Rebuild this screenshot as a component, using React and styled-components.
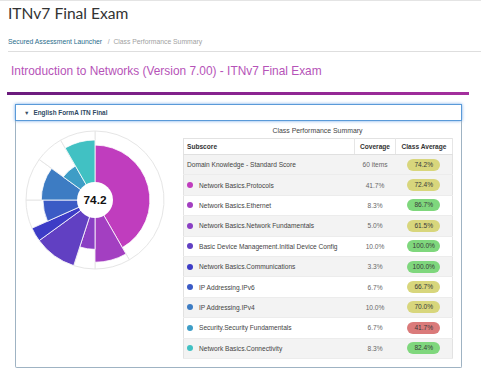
import React from 'react';
import styled, { createGlobalStyle } from 'styled-components';

const GlobalStyle = createGlobalStyle`
  html, body {
    margin: 0;
    padding: 0;
    background: #fff;
  }

  body {
    font-family: "Liberation Sans", Arial, sans-serif;
    color: #333;
  }
`;

const Page = styled.div`
  border-top: 1px solid #e4e4e4;
  width: 481px;
  height: 370px;
  overflow: hidden;
`;

const Title = styled.h1`
  font-family: Lato, "Liberation Sans", sans-serif;
  font-size: 15.6px;
  font-weight: 400;
  line-height: 20px;
  color: #333;
  margin: 2px 0 0 8px;
`;

const Breadcrumbs = styled.div`
  margin: 14px 0 0 8px;
  padding-bottom: 5px;
  border-bottom: 1px solid #dedede;
  font-size: 6.8px;
  line-height: 9px;
  color: #a2a2a2;
  white-space: pre;
`;

const Crumb = styled.span`
  color: #2a6d8c;
`;

const Heading = styled.h2`
  font-family: "Liberation Sans", Arial, sans-serif;
  font-size: 11.9px;
  font-weight: 400;
  line-height: 16px;
  color: #b653b8;
  margin: 11px 0 0 11px;
`;

const Rule = styled.div`
  height: 3px;
  margin: 13px 12px 0 7px;
  background: linear-gradient(90deg, #6a1b7c, #8a2490 50%, #a42f9d);
`;

const Panel = styled.section`
  margin: 9px 19px 0 15px;
`;

const PanelHeader = styled.div`
  height: 15px;
  border: 1px solid #5a9ad8;
  box-shadow: 0 0 3px rgba(80, 150, 230, 0.8);
  display: flex;
  align-items: center;
  padding-left: 8px;
  font-size: 6.4px;
  font-weight: 700;
  color: #2f4a63;
`;

const Caret = styled.span`
  font-size: 5.5px;
  margin-right: 4px;
  color: #3a4f66;
`;

const PanelBody = styled.div`
  height: 246px;
  border: 1px solid #9fb3c3;
  border-top: none;
  border-radius: 0 0 2px 2px;
  display: flex;
  align-items: flex-start;
`;

const Chart = styled.svg`
  margin: 4px 0 0 4px;
  flex: none;
`;

const TableWrap = styled.div`
  margin: 5px 0 0 13px;
  width: 269px;
`;

const Caption = styled.div`
  text-align: center;
  font-size: 6.9px;
  line-height: 9px;
  color: #444;
  margin-bottom: 3px;
`;

const Table = styled.table`
  width: 269px;
  border-collapse: collapse;
  border: 1px solid #e2e2e2;
  table-layout: fixed;
  font-size: 6.6px;
  color: #444;
`;

const HeadCell = styled.th`
  height: 15px;
  padding: 0 3px;
  font-weight: 700;
  text-align: ${p => (p.$left ? 'left' : 'center')};
  border-right: 1px solid #e6e6e6;
  border-bottom: 1px solid #e0e0e0;
  color: #333;
`;

const Row = styled.tr`
  height: 20.4px;
  background: ${p => (p.$shade ? '#f3f3f3' : '#fff')};
  border-bottom: 1px solid #ececec;
`;

const Cell = styled.td`
  padding: 0 3px;
  text-align: ${p => (p.$left ? 'left' : 'center')};
  color: ${p => (p.$muted ? '#666' : '#444')};
`;

const Label = styled.span`
  display: flex;
  align-items: center;
  gap: 6px;
`;

const Dot = styled.span`
  width: 6px;
  height: 6px;
  border-radius: 50%;
  background: ${p => p.$color};
  flex: none;
`;

const Badge = styled.span`
  display: inline-block;
  width: 33px;
  height: 12px;
  line-height: 12px;
  border-radius: 6px;
  font-size: 6.6px;
  color: #3a3a3a;
  background: ${p => p.$bg};
`;

const subscores = [
  { name: 'Network Basics.Protocols', coverage: 41.7, score: 72.4, color: '#c03dbe' },
  { name: 'Network Basics.Ethernet', coverage: 8.3, score: 86.7, color: '#a33fc1' },
  { name: 'Network Basics.Network Fundamentals', coverage: 5.0, score: 61.5, color: '#8a3fc4' },
  { name: 'Basic Device Management.Initial Device Config', coverage: 10.0, score: 100.0, color: '#6140c2' },
  { name: 'Network Basics.Communications', coverage: 3.3, score: 100.0, color: '#3d3cc6' },
  { name: 'IP Addressing.IPv6', coverage: 6.7, score: 66.7, color: '#3b5bc5' },
  { name: 'IP Addressing.IPv4', coverage: 10.0, score: 70.0, color: '#3d7cc3' },
  { name: 'Security.Security Fundamentals', coverage: 6.7, score: 41.7, color: '#3e9dc6' },
  { name: 'Network Basics.Connectivity', coverage: 8.3, score: 82.4, color: '#41c1c3' },
];

const badgeColor = (score) => {
  if (score >= 80) return '#7fd77d';
  if (score >= 50) return '#d8d67c';
  return '#da7a7a';
};

const CX = 75;
const CY = 75;
const R_OUT = 69;
const R_IN = 18;

const point = (deg, r) => {
  const a = (deg * Math.PI) / 180;
  return [CX + r * Math.sin(a), CY - r * Math.cos(a)];
};

const sector = (a0, a1, r) => {
  const [x0, y0] = point(a0, r);
  const [x1, y1] = point(a1, r);
  const large = a1 - a0 > 180 ? 1 : 0;
  return `M${CX} ${CY} L${x0.toFixed(2)} ${y0.toFixed(2)} A${r} ${r} 0 ${large} 1 ${x1.toFixed(2)} ${y1.toFixed(2)} Z`;
};

const RoseChart = () => {
  const total = subscores.reduce((s, d) => s + d.coverage, 0);
  let start = 0;
  const slices = subscores.map((d) => {
    const sweep = (d.coverage / total) * 360;
    const slice = { ...d, a0: start, a1: start + sweep };
    start += sweep;
    return slice;
  });

  return (
    <Chart width="150" height="150" viewBox="0 0 150 150">
      {slices.map(s => (
        <path key={`bg-${s.name}`} d={sector(s.a0, s.a1, R_OUT)} fill="#fff" stroke="#e6e6e6" strokeWidth="1" />
      ))}
      {slices.map(s => (
        <path
          key={s.name}
          d={sector(s.a0, s.a1, R_IN + (R_OUT - R_IN) * (s.score / 100))}
          fill={s.color}
          stroke="#fff"
          strokeWidth="0.8"
        />
      ))}
      <circle cx={CX} cy={CY} r={R_IN} fill="#fff" />
      <text
        x={CX}
        y={CY + 4.2}
        textAnchor="middle"
        fontFamily="Liberation Sans, Arial, sans-serif"
        fontWeight="700"
        fontSize="11.8"
        fill="#111"
      >
        74.2
      </text>
    </Chart>
  );
};

const App = () => (
  <Page>
    <GlobalStyle />
    <Title>ITNv7 Final Exam</Title>
    <Breadcrumbs>
      <Crumb>Secured Assessment Launcher</Crumb>
      {'   /  Class Performance Summary'}
    </Breadcrumbs>
    <Heading>Introduction to Networks (Version 7.00) - ITNv7 Final Exam</Heading>
    <Rule />
    <Panel>
      <PanelHeader>
        <Caret>▼</Caret>
        English FormA ITN Final
      </PanelHeader>
      <PanelBody>
        <RoseChart />
        <TableWrap>
          <Caption>Class Performance Summary</Caption>
          <Table>
            <colgroup>
              <col style={{ width: '171px' }} />
              <col style={{ width: '41px' }} />
              <col style={{ width: '57px' }} />
            </colgroup>
            <thead>
              <tr>
                <HeadCell $left>Subscore</HeadCell>
                <HeadCell>Coverage</HeadCell>
                <HeadCell>Class Average</HeadCell>
              </tr>
            </thead>
            <tbody>
              <Row $shade>
                <Cell $left>Domain Knowledge - Standard Score</Cell>
                <Cell $muted>60 items</Cell>
                <Cell><Badge $bg={badgeColor(74.2)}>74.2%</Badge></Cell>
              </Row>
              {subscores.map((s, i) => (
                <Row key={s.name} $shade={i % 2 === 0}>
                  <Cell $left>
                    <Label>
                      <Dot $color={s.color} />
                      {s.name}
                    </Label>
                  </Cell>
                  <Cell $muted>{s.coverage.toFixed(1)}%</Cell>
                  <Cell><Badge $bg={badgeColor(s.score)}>{s.score.toFixed(1)}%</Badge></Cell>
                </Row>
              ))}
            </tbody>
          </Table>
        </TableWrap>
      </PanelBody>
    </Panel>
  </Page>
);

export default App;
